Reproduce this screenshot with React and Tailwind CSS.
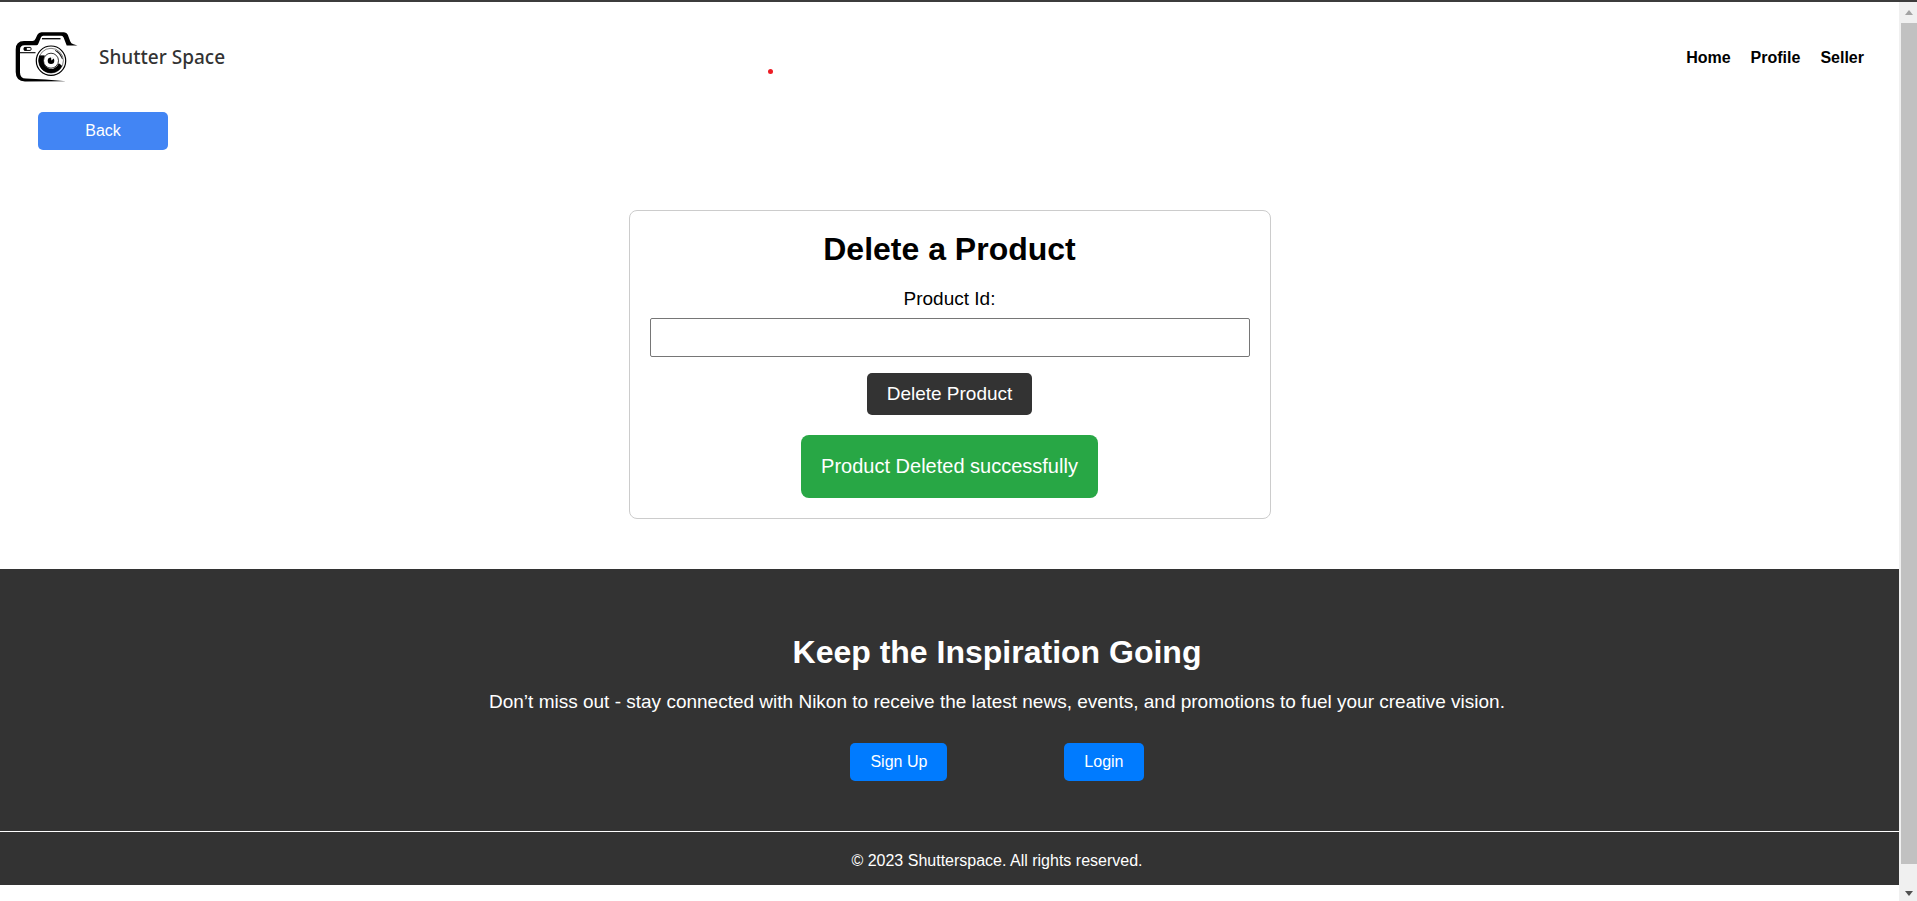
import React from "react";

function CameraLogo() {
  return (
    <svg viewBox="0 0 64 52" className="h-[52px] w-16" aria-label="Shutter Space logo" role="img">
      <path
        d="M51 50.2 L10 50.4 Q0.7 50.2 0.7 41 V18.5 Q0.7 10 9 10 H17.5 Q19.6 10 20.4 8 L22.4 3.8 Q23.6 1.3 26.5 1.3 H49 Q51.8 1.3 52.8 3.8 L55.2 10.2 Q56 12.6 58.5 13.2 L62.5 14.5 H51.7 L48.6 6.4 Q48 4.8 46.3 4.8 H28.2 Q26.6 4.8 26 6.3 L23.2 13 Q22.8 14.2 21.4 14.2 H9.5 Q5 14.2 5 18.7 V41.5 Q5 47.4 11 47.6 Q30 48.4 51 50.2 Z"
        fill="#000"
      />
      <path d="M27 7.7 H45.5" stroke="#000" strokeWidth="1.3" />
      <path d="M5 21.7 H20.5" stroke="#000" strokeWidth="1.1" />
      <rect x="9" y="16.4" width="7" height="3" rx="0.8" fill="#fff" stroke="#000" strokeWidth="1" />
      <rect x="9" y="16.4" width="2.8" height="3" fill="#000" />
      <circle cx="36" cy="29.7" r="14.7" fill="#fff" stroke="#000" strokeWidth="1.2" />
      <circle cx="36" cy="29.7" r="12.4" fill="none" stroke="#000" strokeWidth="0.5" />
      <path
        d="M24.6 24.6 L29.8 24.4 A8.2 8.2 0 1 0 43.8 32.3 L46.8 34.6 A12 12 0 0 1 24.6 24.6 Z"
        fill="#000"
      />
      <path
        d="M24.4 24.8 L29.6 24.8 Q27.6 30 30 34.6 Q33 38.6 37.5 38.2 Q42 37.6 44 33.4 L47 35.2 Q43.6 41.9 36 42 Q28 41.8 25 35 Q23 30 24.4 24.8 Z"
        fill="#000"
      />
      <path d="M40 19.3 Q46 21.5 47.4 28 Q45 22.5 40 19.3 Z" fill="#000" stroke="#000" strokeWidth="0.4" />
      <circle cx="36" cy="29.7" r="7.5" fill="#fff" stroke="#000" strokeWidth="0.8" />
      <circle cx="36" cy="29.7" r="3.3" fill="#000" />
      <path d="M36 25.8 L36.4 29.6 L39 27.2 Z" fill="#fff" />
    </svg>
  );
}

function Scrollbar() {
  return (
    <div aria-hidden="true" className="flex w-[18px] shrink-0 flex-col items-end bg-[#f0f0f0]">
      <div className="flex h-[21px] w-4 items-center justify-center">
        <svg viewBox="0 0 8 5" className="h-[5px] w-2">
          <path d="M0 5 L4 0 L8 5 Z" fill="#a3a3a3" />
        </svg>
      </div>
      <div className="w-4 grow bg-[#c1c1c1]" />
      <div className="flex h-[37px] w-4 items-end justify-center pb-[5px]">
        <svg viewBox="0 0 8 5" className="h-[5px] w-2">
          <path d="M0 0 L4 5 L8 0 Z" fill="#505050" />
        </svg>
      </div>
    </div>
  );
}

function Header() {
  return (
    <header className="relative flex items-center justify-between pt-[29px] pr-[35px] pl-[15px]">
      <div className="flex items-center gap-5">
        <CameraLogo />
        <span className="font-['Noto_Sans',sans-serif] text-[19px] leading-[26px] font-medium text-[#333]">
          Shutter Space
        </span>
      </div>
      <nav className="flex gap-5 leading-[23px] font-bold">
        <a href="#home">Home</a>
        <a href="#profile">Profile</a>
        <a href="#seller">Seller</a>
      </nav>
      <span aria-hidden="true" className="absolute top-[67px] left-[768px] size-[5px] rounded-full bg-[#ed1c24]" />
    </header>
  );
}

function DeleteCard() {
  return (
    <form
      onSubmit={(e) => e.preventDefault()}
      className="mx-auto mt-[60px] flex w-full max-w-[642px] flex-col items-center rounded-lg border border-[#ccc] p-5"
    >
      <h1 className="text-[32px] leading-9 font-bold">Delete a Product</h1>
      <label htmlFor="product-id" className="mt-5 text-[19px] leading-[23px]">
        Product Id:
      </label>
      <input
        id="product-id"
        type="text"
        className="mt-2 h-[39px] w-full rounded-xs border border-[#767676] bg-white px-2"
      />
      <button type="submit" className="mt-4 rounded-[5px] bg-[#333] px-5 py-[10px] text-[19px] leading-[22px] text-white">
        Delete Product
      </button>
      <p role="status" className="mt-5 rounded-lg bg-[#28a745] p-5 text-[20px] leading-[23px] text-white">
        Product Deleted successfully
      </p>
    </form>
  );
}

function Footer() {
  return (
    <footer className="mt-[50px] bg-[#333] text-center text-white">
      <div className="flex flex-col items-center pt-[65px] pb-[50px] pl-[5%]">
        <h2 className="text-[32px] leading-9 font-bold">Keep the Inspiration Going</h2>
        <p className="mt-5 text-[19px] leading-[23px]">
          Don’t miss out - stay connected with Nikon to receive the latest news, events, and promotions to fuel your
          creative vision.
        </p>
        <div className="mt-[30px] flex gap-[117px]">
          <button type="button" className="rounded-[5px] bg-[#007bff] px-5 py-[10px] leading-[18px]">
            Sign Up
          </button>
          <button type="button" className="rounded-[5px] bg-[#007bff] px-5 py-[10px] leading-[18px]">
            Login
          </button>
        </div>
      </div>
      <p className="border-t border-white pt-5 pb-[15px] pl-[5%] leading-[18px]">
        © 2023 Shutterspace. All rights reserved.
      </p>
    </footer>
  );
}

export default function App() {
  return (
    <div className="flex min-h-screen border-t-2 border-[#3c3c3c] bg-white font-['Liberation_Sans',Arial,sans-serif] text-base text-black">
      <div className="min-w-0 grow">
        <Header />
        <main>
          <button
            type="button"
            className="mt-[29px] ml-[38px] block w-[130px] rounded-[5px] bg-[#4285f4] py-[10px] leading-[18px] text-white"
          >
            Back
          </button>
          <DeleteCard />
        </main>
        <Footer />
      </div>
      <Scrollbar />
    </div>
  );
}
